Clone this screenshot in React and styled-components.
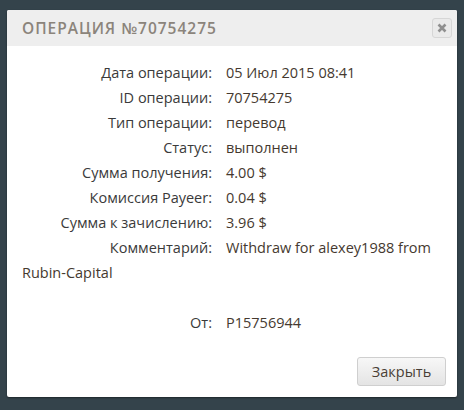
import React from 'react';
import styled, { createGlobalStyle } from 'styled-components';

const GlobalStyle = createGlobalStyle`
  html, body {
    margin: 0;
    background: #34434b;
  }
  body {
    font-family: 'Open Sans', 'Liberation Sans', sans-serif;
  }
`;

const Page = styled.div`
  padding: 10px 7px 0 7px;
  height: 410px;
  box-sizing: border-box;
`;

const Modal = styled.div`
  width: 450px;
  height: 387px;
  background: #fff;
  border-radius: 2px;
  box-shadow: 0 1px 2px rgba(0, 0, 0, 0.45);
  display: flex;
  flex-direction: column;
  overflow: hidden;
`;

const Header = styled.div`
  height: 36px;
  background: #eeeeee;
  display: flex;
  align-items: center;
  justify-content: space-between;
  padding: 0 5px 0 15px;
`;

const Title = styled.h3`
  margin: 0;
  font-size: 15.5px;
  font-weight: 600;
  letter-spacing: 1px;
  color: #8b847b;
`;

const CloseBtn = styled.button`
  width: 20px;
  height: 20px;
  padding: 0;
  border: 1px solid #d6d6d6;
  border-radius: 3px;
  background: #eaeaea;
  display: flex;
  align-items: center;
  justify-content: center;
  box-sizing: border-box;
`;

const Body = styled.div`
  flex: 1;
  padding: 14px 15px 0 15px;
  font-size: 14.5px;
  color: #333;
`;

const Row = styled.div`
  line-height: 25px;
  margin-bottom: ${(p) => (p.$gapAfter ? '25px' : '0')};
`;

const Label = styled.span`
  display: inline-block;
  width: 190px;
  text-align: right;
  margin-right: 14px;
  color: #3a3a3a;
`;

const Value = styled.span`
  color: #45392f;
`;

const Footer = styled.div`
  display: flex;
  justify-content: flex-end;
  padding: 0 11px 11px 0;
`;

const Button = styled.button`
  width: 89px;
  height: 29px;
  border: 1px solid #cfcfcf;
  border-radius: 3px;
  background: linear-gradient(#f7f7f7, #e4e4e4);
  font-family: 'Open Sans', 'Liberation Sans', sans-serif;
  font-size: 14.5px;
  color: #4a3f36;
  padding: 0;
`;

const rows = [
  ['Дата операции:', '05 Июл 2015 08:41'],
  ['ID операции:', '70754275'],
  ['Тип операции:', 'перевод'],
  ['Статус:', 'выполнен'],
  ['Сумма получения:', '4.00 $'],
  ['Комиссия Payeer:', '0.04 $'],
  ['Сумма к зачислению:', '3.96 $'],
  ['Комментарий:', 'Withdraw for alexey1988 from Rubin-Capital', true],
  ['От:', 'P15756944'],
];

export default function App() {
  return (
    <>
      <GlobalStyle />
      <Page>
        <Modal>
          <Header>
            <Title>ОПЕРАЦИЯ №70754275</Title>
            <CloseBtn aria-label="close">
              <svg width="10" height="10" viewBox="0 0 10 10">
                <path d="M1.5 1.5 L8.5 8.5 M8.5 1.5 L1.5 8.5" stroke="#8f8f8f" strokeWidth="2.6" strokeLinecap="butt" />
              </svg>
            </CloseBtn>
          </Header>
          <Body>
            {rows.map(([label, value, gap]) => (
              <Row key={label} $gapAfter={gap}>
                <Label>{label}</Label>
                <Value>{value}</Value>
              </Row>
            ))}
          </Body>
          <Footer>
            <Button>Закрыть</Button>
          </Footer>
        </Modal>
      </Page>
    </>
  );
}
